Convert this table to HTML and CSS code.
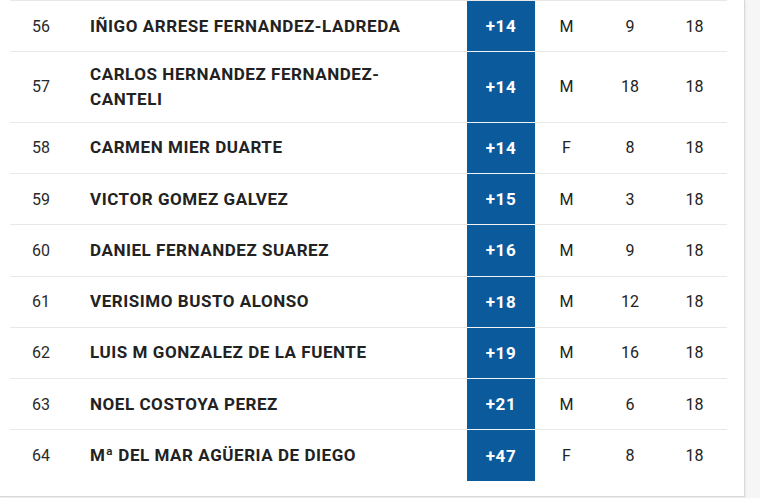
FILE: index.html
```html
<!DOCTYPE html>
<html lang="es">
<head>
<meta charset="utf-8">
<link rel="stylesheet" href="styles.css">
</head>
<body>
<div class="card">
  <div class="list">
    <div class="row"><div class="pos">56</div><div class="name">IÑIGO ARRESE FERNANDEZ-LADREDA</div><div class="score">+14</div><div class="c">M</div><div class="c">9</div><div class="c">18</div></div>
    <div class="row"><div class="pos">57</div><div class="name">CARLOS HERNANDEZ FERNANDEZ-<br>CANTELI</div><div class="score">+14</div><div class="c">M</div><div class="c">18</div><div class="c">18</div></div>
    <div class="row"><div class="pos">58</div><div class="name">CARMEN MIER DUARTE</div><div class="score">+14</div><div class="c">F</div><div class="c">8</div><div class="c">18</div></div>
    <div class="row"><div class="pos">59</div><div class="name">VICTOR GOMEZ GALVEZ</div><div class="score">+15</div><div class="c">M</div><div class="c">3</div><div class="c">18</div></div>
    <div class="row"><div class="pos">60</div><div class="name">DANIEL FERNANDEZ SUAREZ</div><div class="score">+16</div><div class="c">M</div><div class="c">9</div><div class="c">18</div></div>
    <div class="row"><div class="pos">61</div><div class="name">VERISIMO BUSTO ALONSO</div><div class="score">+18</div><div class="c">M</div><div class="c">12</div><div class="c">18</div></div>
    <div class="row"><div class="pos">62</div><div class="name">LUIS M GONZALEZ DE LA FUENTE</div><div class="score">+19</div><div class="c">M</div><div class="c">16</div><div class="c">18</div></div>
    <div class="row"><div class="pos">63</div><div class="name">NOEL COSTOYA PEREZ</div><div class="score">+21</div><div class="c">M</div><div class="c">6</div><div class="c">18</div></div>
    <div class="row last"><div class="pos">64</div><div class="name">Mª DEL MAR AGÜERIA DE DIEGO</div><div class="score">+47</div><div class="c">F</div><div class="c">8</div><div class="c">18</div></div>
  </div>
</div>
</body>
</html>
```
FILE: styles.css
```css
html, body {
  margin: 0;
  padding: 0;
  background: #f6f6f7;
  height: 100%;
  overflow: hidden;
}
body {
  font-family: Roboto, "Liberation Sans", sans-serif;
  color: #222;
}
.card {
  width: 745px;
  height: 497px;
  box-sizing: border-box;
  background: #fff;
  border-right: 1px solid #d9d9d9;
  border-bottom: 1px solid #d9d9d9;
  box-shadow: 1px 1px 2px rgba(0,0,0,0.06);
  padding: 0 17px 0 10px;
}
.list {
  border-top: 1px solid #e8e8e8;
}
.row {
  display: grid;
  grid-template-columns: 62px 395px 68px 63px 64px 65px;
  min-height: 50.33px;
  border-bottom: 1px solid #e8e8e8;
  font-size: 16px;
}
.row.last {
  border-bottom: none;
}
.row > div {
  display: flex;
  align-items: center;
}
.pos {
  justify-content: center;
  color: #2a2a2a;
}
.name {
  padding: 9.6px 0 9.6px 18px;
  font-size: 17px;
  font-weight: 700;
  letter-spacing: 0.55px;
  line-height: 25px;
  color: #222;
}
.score {
  justify-content: center;
  background: #0b5a9c;
  color: #fff;
  font-size: 17px;
  font-weight: 700;
  letter-spacing: 0.5px;
  box-shadow: 0 1px 0 rgba(255,255,255,0.5);
}
.row.last .score {
  box-shadow: none;
}
.c {
  justify-content: center;
  color: #222;
}
```
